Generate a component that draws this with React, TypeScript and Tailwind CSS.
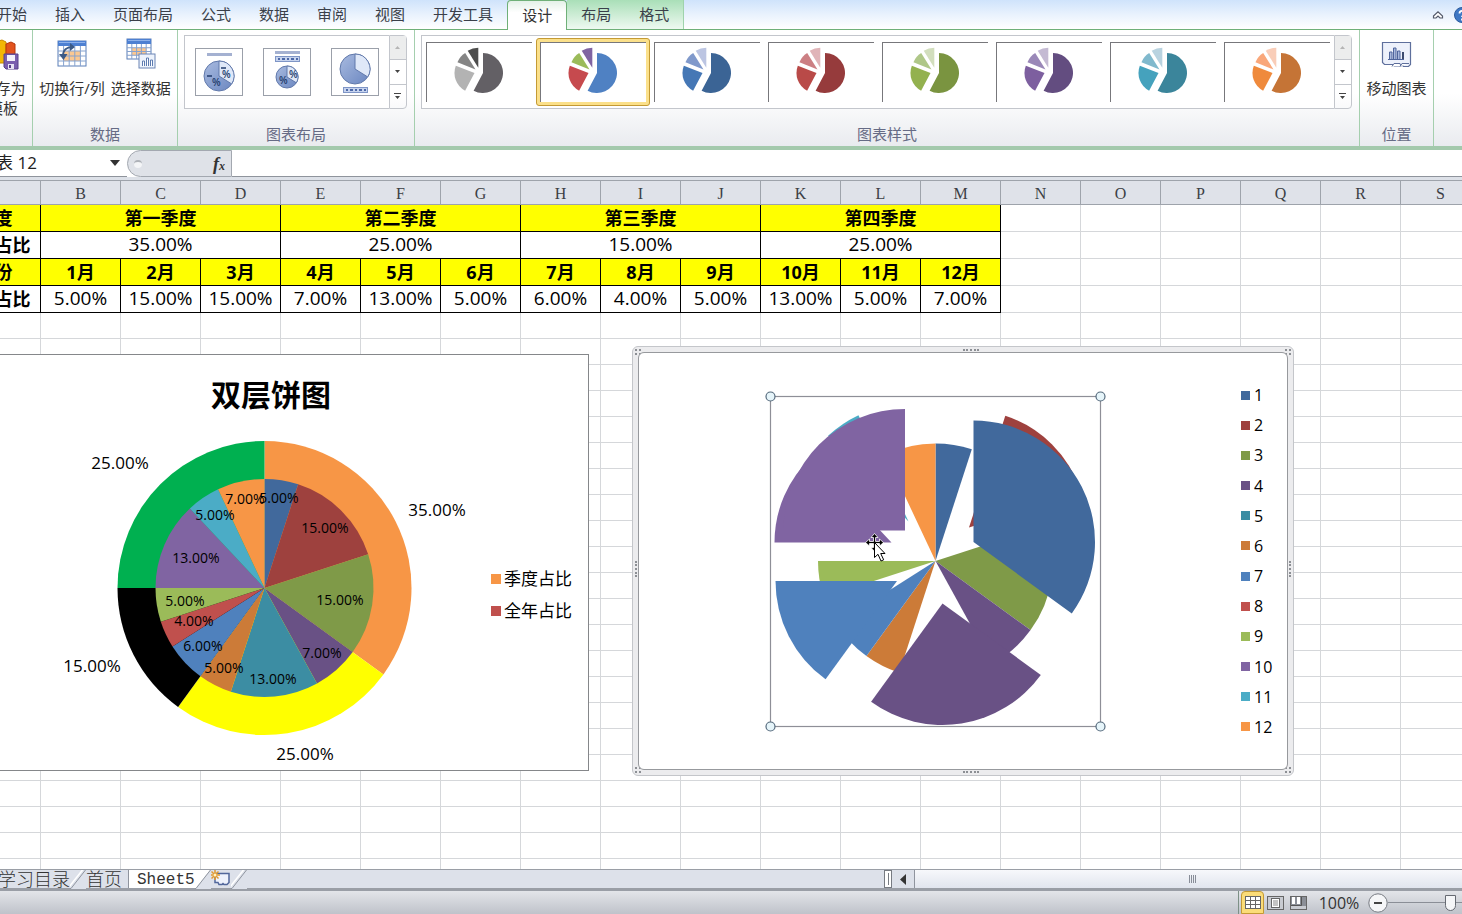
import type { ReactNode } from 'react'

const menuTabs = ['开始', '插入', '页面布局', '公式', '数据', '审阅', '视图', '开发工具']

const columns = 'BCDEFGHIJKLMNOPQRS'.split('')

const quarters = [
  { name: '第一季度', share: '35.00%' },
  { name: '第二季度', share: '25.00%' },
  { name: '第三季度', share: '15.00%' },
  { name: '第四季度', share: '25.00%' },
]

const months = ['5.00%', '15.00%', '15.00%', '7.00%', '13.00%', '5.00%', '6.00%', '4.00%', '5.00%', '13.00%', '5.00%', '7.00%']

const palette = [
  '#41699c', '#9e413e', '#7f9a48', '#695185', '#3c8da3', '#cc7b38',
  '#4f81bd', '#c0504d', '#9bbb59', '#8064a2', '#4bacc6', '#f79646',
]

const legendColors = [
  'bg-[#41699c]', 'bg-[#9e413e]', 'bg-[#7f9a48]', 'bg-[#695185]', 'bg-[#3c8da3]', 'bg-[#cc7b38]',
  'bg-[#4f81bd]', 'bg-[#c0504d]', 'bg-[#9bbb59]', 'bg-[#8064a2]', 'bg-[#4bacc6]', 'bg-[#f79646]',
]

// big slice, second, third, fourth
const chartStyles = [
  ['#636065', '#b3b3b3', '#858585', '#4d4d4d'],
  ['#4f81c3', '#c64a4e', '#9bbb59', '#8064a2'],
  ['#3b6495', '#4577b5', '#8099cb', '#bcc5e2'],
  ['#963b3c', '#b94a48', '#cc7f83', '#e0b4b8'],
  ['#7a9440', '#93b14f', '#afc788', '#d2debd'],
  ['#634d80', '#7d5f9f', '#9a88b8', '#c4bad3'],
  ['#3b859b', '#45a2bd', '#80b9cd', '#b9d3e0'],
  ['#c57436', '#ef8a3c', '#f9a77a', '#f9cdb8'],
]

// wedge with its tip at cx,cy; angles in degrees, clockwise from 12 o'clock
function wedge(cx: number, cy: number, r: number, from: number, to: number) {
  const point = (deg: number) => {
    const a = (deg * Math.PI) / 180
    return `${(cx + r * Math.sin(a)).toFixed(2)} ${(cy - r * Math.cos(a)).toFixed(2)}`
  }
  return `M${cx} ${cy}L${point(from)}A${r} ${r} 0 ${to - from > 180 ? 1 : 0} 1 ${point(to)}Z`
}

const monthAngles = [0, 18, 72, 126, 151.2, 198, 216, 237.6, 252, 270, 316.8, 334.8, 360]

function Group({ label, className, children }: { label?: string; className: string; children?: ReactNode }) {
  return (
    <section className={`flex shrink-0 flex-col border-r border-[#a5cfae] ${className}`}>
      <div className="flex flex-1 justify-center">{children}</div>
      <h2 className="h-[22px] text-center text-[15px] leading-5 whitespace-nowrap text-[#666b85]">{label}</h2>
    </section>
  )
}

function RibbonButton({ icon, children }: { icon: ReactNode; children: ReactNode }) {
  return (
    <button className="flex shrink-0 flex-col items-center gap-2 pt-2 text-[15px] leading-5 whitespace-nowrap text-[#333]">
      {icon}
      <span>{children}</span>
    </button>
  )
}

function GalleryScroll() {
  return (
    <div className="flex w-[18px] flex-col divide-y divide-[#c3c6cc] rounded-r-sm border border-[#c3c6cc]">
      <button aria-label="上一行" className="flex flex-1 items-center justify-center bg-[#eceded]">
        <svg width="5" height="3"><path d="M0 3h5L2.500 0z" fill="#b5b5b5" /></svg>
      </button>
      <button aria-label="下一行" className="flex flex-1 items-center justify-center">
        <svg width="5" height="3"><path d="M0 0h5L2.500 3z" fill="#444" /></svg>
      </button>
      <button aria-label="其他" className="flex flex-1 items-center justify-center">
        <svg width="7" height="6"><path d="M0 0h7v1H0zM1 3h5L3.500 6z" fill="#444" /></svg>
      </button>
    </div>
  )
}

function TableGrid({ width, height, x, y }: { width: number; height: number; x: number; y: number }) {
  const w = width / 5
  const h = (height - 5) / 4
  return (
    <g>
      <rect x={x} y={y} width={width} height={height} fill="#fff" stroke="#5b7fb8" />
      <rect x={x + w} y={y + 5 + h} width={w * 3} height={h * 2} fill="#fbc891" />
      <path
        d={[1, 2, 3, 4].map(i => `M${x + w * i} ${y + 5}v${height - 5}`).join('') + [1, 2, 3].map(i => `M${x} ${y + 5 + h * i}h${width}`).join('')}
        stroke="#86a3cf"
      />
      <rect x={x} y={y} width={width} height="5" fill="#4d80d2" />
      <path d={`M${x + 1} ${y + 1.500}h${width - 2}`} stroke="#8db1ea" />
    </g>
  )
}

function SaveTemplateIcon() {
  return (
    <svg width="32" height="32" viewBox="0 0 32 32">
      <path d="M8 4l7-2 4 2v21H8z" fill="#f2b705" stroke="#c68a00" />
      <path d="M19 6l5-2 4 2v17h-9z" fill="#e2531d" stroke="#b5360b" />
      <path d="M17 16h14v15H19l-2-2z" fill="#7a5fae" stroke="#57418a" />
      <rect x="20" y="17" width="8" height="6" fill="#f3f1fa" />
      <rect x="21" y="26" width="6" height="5" fill="#e7e3f3" />
      <rect x="22" y="27" width="2" height="3" fill="#57418a" />
    </svg>
  )
}

function SwitchIcon() {
  return (
    <svg width="32" height="32" viewBox="0 0 32 32">
      <TableGrid x={2} y={3} width={28} height={25} />
      <path d="M7 18c0-6 4-9 9-9" fill="none" stroke="#3c5a85" strokeWidth="2" />
      <path d="M14 5l5 4-5 4zM3 16l4.500 6 4-6z" fill="#3c5a85" />
    </svg>
  )
}

function SelectDataIcon() {
  return (
    <svg width="32" height="32" viewBox="0 0 32 32">
      <TableGrid x={2} y={1} width={24} height={20} />
      <rect x="14" y="16" width="16" height="14" fill="#edf3fc" stroke="#6c86b5" />
      <path d="M17.500 28v-5h2v5M21.500 28v-8h2v8M25.500 28v-6h2v6" fill="#fff" stroke="#5c7bb0" />
    </svg>
  )
}

function MoveChartIcon() {
  return (
    <svg width="32" height="32" viewBox="0 0 32 32">
      <path d="M2.500 4.500h28v22l-2 2h-5l-2-2-2 2h-5l-2-2H4.500l-2-2z" fill="#edf1fb" stroke="#5e6f9c" strokeWidth="1.200" />
      <path d="M12 28.500l2-3h6l1 3M20 28.500l2-3h7" fill="#fff" stroke="#5e6f9c" />
      <path d="M9.500 21v-7h2.500v7M13.500 21V10h2.500v11M17.500 21v-8h2.500v8" fill="#a9b9dd" stroke="#4f659c" />
      <path d="M22 14h2v7h-2z" fill="#3d4b6e" />
      <path d="M8 21.500h16" stroke="#4f659c" />
    </svg>
  )
}

function LayoutIcon({ kind }: { kind: number }) {
  const cy = [27, 28, 20][kind]
  const r = kind === 1 ? 11 : 15
  return (
    <svg width="46" height="46" viewBox="0 0 46 46">
      <defs>
        <linearGradient id="layoutPie" x1="0" y1="0" x2="1" y2="1">
          <stop offset="0" stopColor="#a9bbe0" />
          <stop offset="1" stopColor="#6a86c0" />
        </linearGradient>
      </defs>
      {kind < 2 && <rect x="11" y={kind ? 2 : 4} width="25" height="3" fill="#a4b1d1" />}
      {kind > 0 && (
        <g>
          <rect x="11.500" y={kind === 1 ? 7.500 : 38.500} width="24" height="5" fill="#c6d3ee" stroke="#7e95c6" />
          <path d={kind === 1 ? 'M14 10h20' : 'M14 41h20'} stroke="#4d69a8" strokeWidth="2" strokeDasharray="2 2 3 2" />
        </g>
      )}
      <circle cx="23" cy={cy} r={r} fill="url(#layoutPie)" stroke="#6179ab" />
      <path d={wedge(23, cy, r, 0, 122)} fill="#dfe8f8" stroke="#6179ab" />
      {kind === 0 && (
        <g fontFamily="Open Sans, sans-serif" fontSize="10" fontWeight="600" fill="#223c6d">
          <text x="26" y="29">%</text>
          <text x="16" y="37">%</text>
          <path d="M25 19h5M11 27h5" stroke="#223c6d" strokeWidth="1.500" />
        </g>
      )}
      {kind === 1 && (
        <g fontFamily="Open Sans, sans-serif" fontSize="10" fontWeight="600" fill="#223c6d">
          <text x="25" y="29">%</text>
          <text x="15" y="35">%</text>
        </g>
      )}
    </svg>
  )
}

function StyleIcon({ colors }: { colors: string[] }) {
  return (
    <svg width="56" height="52" viewBox="0 0 56 52">
      <path d={wedge(33, 28, 20, 0, 208)} fill={colors[0]} />
      <path d={wedge(24.5, 28, 20, 208, 291)} fill={colors[1]} />
      <path d={wedge(25.5, 24.5, 19.5, 292, 328)} fill={colors[2]} />
      <path d={wedge(28.3, 22.7, 20, 328, 360)} fill={colors[3]} />
    </svg>
  )
}

function MenuBar() {
  return (
    <nav className="flex h-[30px] shrink-0 items-stretch border-b border-[#6fb078] bg-linear-to-b from-[#cfe3fb] via-[#e9f2fd] to-white text-[15px] text-[#3a3f4a]">
      <div className="-ml-[17px] flex min-w-0 flex-1 pr-4">
        {menuTabs.map(tab => (
          <button key={tab} className="shrink-0 px-3.5 whitespace-nowrap">{tab}</button>
        ))}
        <button className="-mb-px shrink-0 rounded-t-sm border-x border-t border-[#6fb078] bg-linear-to-b from-[#e4f1e8] to-white to-40% px-3.5 text-[#333]">
          设计
        </button>
        <div className="flex shrink-0 border-r border-[#9fd3ac] bg-linear-to-b from-[#a9dfb8] to-[#eef9f1]">
          <button className="px-3.5">布局</button>
          <button className="px-3.5">格式</button>
        </div>
      </div>
      <div className="flex shrink-0 items-center gap-2 overflow-hidden">
        <button aria-label="功能区最小化">
          <svg width="16" height="10" viewBox="0 0 16 10">
            <path d="M3.500 6L8 1.800 12.500 6v2H10L8 6 6 8H3.500z" fill="#fff" stroke="#555b6b" strokeWidth="1.200" />
          </svg>
        </button>
        <button aria-label="帮助" className="-mr-2">
          <svg width="16" height="16" viewBox="0 0 16 16">
            <circle cx="8" cy="8" r="7.500" fill="#3f78c4" stroke="#2c5b9e" />
            <path d="M5.500 6.500c0-3.500 5-3.500 5 0 0 2-2.500 1.800-2.500 3.500M8 11.500v2" fill="none" stroke="#fff" strokeWidth="1.800" />
          </svg>
        </button>
      </div>
    </nav>
  )
}

function Ribbon() {
  return (
    <div className="flex h-[120px] shrink-0 overflow-hidden border-b-4 border-[#a3c9ac] bg-linear-to-b from-white from-55% to-[#e9ebef]">
      <Group className="w-[33px]">
        <div className="-ml-[26px]">
          <RibbonButton icon={<SaveTemplateIcon />}>
            另存为<br />模板
          </RibbonButton>
        </div>
      </Group>
      <Group label="数据" className="w-[145px]">
        <div className="flex gap-1.5">
          <RibbonButton icon={<SwitchIcon />}>切换行/列</RibbonButton>
          <RibbonButton icon={<SelectDataIcon />}>选择数据</RibbonButton>
        </div>
      </Group>
      <Group label="图表布局" className="w-[237px]">
        <div className="mt-[5px] mr-0.5 flex h-[74px]">
          <div className="flex items-center gap-5 border border-r-0 border-[#c3c6cc] bg-white px-2.5">
            {[0, 1, 2].map(kind => (
              <button key={kind} aria-label={`布局 ${kind + 1}`} className="border border-[#9ba0aa] bg-white">
                <LayoutIcon kind={kind} />
              </button>
            ))}
          </div>
          <GalleryScroll />
        </div>
      </Group>
      <Group label="图表样式" className="w-[945px]">
        <div className="mt-[5px] mr-0.5 flex h-[74px]">
          <div className="flex items-center border border-r-0 border-[#c3c6cc] bg-white">
            {chartStyles.map((colors, i) => (
              <button
                key={i}
                aria-label={`样式 ${i + 1}`}
                className={
                  i === 1
                    ? 'h-[68px] w-[114px] rounded-[3px] border border-[#c49a34] bg-[#fbe08a] p-[3px]'
                    : 'h-[68px] w-[114px] p-1'
                }
              >
                <span className="flex h-full w-full items-start justify-center border-t border-l border-[#77777b] bg-white pt-0.5 pr-0.5">
                  <StyleIcon colors={colors} />
                </span>
              </button>
            ))}
          </div>
          <GalleryScroll />
        </div>
      </Group>
      <Group label="位置" className="w-[74px]">
        <RibbonButton icon={<MoveChartIcon />}>移动图表</RibbonButton>
      </Group>
    </div>
  )
}

function FormulaBar() {
  return (
    <div className="flex h-[30px] shrink-0 border-b-3 border-[#dde1e8] bg-white">
      <div className="flex w-[127px] shrink-0 items-center border-b border-[#8f949c]">
        <input aria-label="名称框" defaultValue="表 12" className="-ml-1 w-[114px] text-[17px] text-[#222] outline-none" />
        <button aria-label="名称列表">
          <svg width="10" height="6"><path d="M0 0h10L5 6z" fill="#333" /></svg>
        </button>
      </div>
      <div className="flex w-[105px] shrink-0 items-center justify-between rounded-l-full border border-[#a3a8b0] bg-[#dfe2e8] pr-1.5 pl-1.5">
        <span className="h-2 w-2 rounded-full border-t-2 border-[#aeb2b8] bg-[#f4f5f7]" />
        <button className="flex items-center font-['Liberation_Serif',serif] text-lg leading-none font-bold text-[#333] italic">
          f<span className="pt-1 text-xs">x</span>
        </button>
      </div>
      <input aria-label="编辑栏" className="min-w-0 flex-1 border-b border-[#8f949c] text-base outline-none" />
    </div>
  )
}

function Cells() {
  return (
    <table className="-ml-[51px] w-[1532px] table-fixed border-separate border-spacing-0 text-center text-black">
      <colgroup>
        <col className="w-[92px]" />
        {columns.map(c => <col key={c} className="w-20" />)}
      </colgroup>
      <thead>
        <tr className="h-[25px] bg-[#dfe2e9] font-['Liberation_Serif',serif] text-base leading-5 text-[#3c3f45]">
          <th className="border-t border-r border-b border-[#9ea3ab] p-0" />
          {columns.map(c => (
            <th key={c} className="border-t border-r border-b border-[#9ea3ab] p-0 pt-0.5 font-normal">{c}</th>
          ))}
        </tr>
      </thead>
      <tbody>
        <tr className="h-[27px] text-lg leading-6">
          <th className="border-r border-b border-black bg-[#ffff00] p-0">季度</th>
          {quarters.map(q => (
            <th key={q.name} colSpan={3} className="border-r border-b border-black bg-[#ffff00] p-0">{q.name}</th>
          ))}
          <Blank count={6} />
        </tr>
        <tr className="h-[27px] text-[19px] leading-6">
          <th className="border-r border-b border-black p-0 text-lg leading-6">季度占比</th>
          {quarters.map(q => (
            <td key={q.name} colSpan={3} className="border-r border-b border-black p-0 pb-0.5">{q.share}</td>
          ))}
          <Blank count={6} />
        </tr>
        <tr className="h-[27px] text-lg leading-6">
          <th className="border-r border-b border-black bg-[#ffff00] p-0">月份</th>
          {months.map((_, i) => (
            <th key={i} className="border-r border-b border-black bg-[#ffff00] p-0">{i + 1}月</th>
          ))}
          <Blank count={6} />
        </tr>
        <tr className="h-[27px] text-[19px] leading-6">
          <th className="border-r border-b border-black p-0 text-lg leading-6">全年占比</th>
          {months.map((share, i) => (
            <td key={i} className="border-r border-b border-black p-0 pb-0.5">{share}</td>
          ))}
          <Blank count={6} />
        </tr>
        {Array.from({ length: 30 }, (_, i) => (
          <tr key={i} className="h-[26px]">
            <Blank count={19} />
          </tr>
        ))}
      </tbody>
    </table>
  )
}

function Blank({ count }: { count: number }) {
  return Array.from({ length: count }, (_, i) => <td key={i} className="border-r border-b border-[#d5d7da] p-0" />)
}

const innerLabels = [
  [279, 148], [325, 178], [340, 250], [322, 303], [273, 329], [224, 318],
  [203, 296], [194, 271], [185, 251], [196, 208], [215, 165], [245, 149],
]

function DoublePie() {
  return (
    <figure className="absolute top-[174px] left-0 flex h-[417px] w-[589px] items-center justify-between border border-l-0 border-[#85878a] bg-white">
      <svg width="480" height="415" viewBox="0 0 480 415" className="shrink-0" fontFamily="'Open Sans', 'Noto Sans CJK SC', sans-serif">
        <text x="271" y="51" textAnchor="middle" fontSize="30" fontWeight="700">双层饼图</text>
        <path d={wedge(264.5, 233, 147, 0, 126)} fill="#f79646" />
        <path d={wedge(264.5, 233, 147, 126, 216)} fill="#ffff00" />
        <path d={wedge(264.5, 233, 147, 216, 270)} fill="#000" />
        <path d={wedge(264.5, 233, 147, 270, 360)} fill="#00b050" />
        {palette.map((color, i) => (
          <path key={color} d={wedge(264.5, 233, 109, monthAngles[i], monthAngles[i + 1])} fill={color} />
        ))}
        <g textAnchor="middle" fontSize="14">
          {innerLabels.map(([x, y], i) => <text key={i} x={x} y={y}>{months[i]}</text>)}
        </g>
        <g textAnchor="middle" fontSize="17">
          <text x="437" y="161">35.00%</text>
          <text x="305" y="405">25.00%</text>
          <text x="92" y="317">15.00%</text>
          <text x="120" y="114">25.00%</text>
        </g>
      </svg>
      <ul className="mt-16 flex flex-col gap-2 pr-4 text-[17px] leading-6 whitespace-nowrap">
        <li className="flex items-center gap-[3px]"><i className="size-2.5 bg-[#f79646]" />季度占比</li>
        <li className="flex items-center gap-[3px]"><i className="size-2.5 bg-[#c0504d]" />全年占比</li>
      </ul>
    </figure>
  )
}

// month slices that sit on the shared centre; the rest have been pulled out
const base = [0, 2, 3, 5, 6, 8, 11]

function Grip({ className }: { className: string }) {
  return <span className={`absolute border-dotted border-[#8c8f94] ${className}`} />
}

function ExplodedPie() {
  return (
    <figure className="absolute top-[166px] left-[632px] h-[430px] w-[662px] rounded-md border border-[#c4c6ca] bg-[#ececee] p-[5px]">
      <Grip className="top-0.5 left-1/2 w-4 border-t-2" />
      <Grip className="bottom-0.5 left-1/2 w-4 border-b-2" />
      <Grip className="top-1/2 left-0.5 h-4 border-l-2" />
      <Grip className="top-1/2 right-0.5 h-4 border-r-2" />
      <Grip className="top-0.5 left-0.5 size-1.5 border-2" />
      <Grip className="top-0.5 right-0.5 size-1.5 border-2" />
      <Grip className="bottom-0.5 left-0.5 size-1.5 border-2" />
      <Grip className="right-0.5 bottom-0.5 size-1.5 border-2" />
      <div className="relative flex h-full justify-between rounded-md border border-[#97999d] bg-white pr-[15px]">
        <svg width="480" height="416" viewBox="0 0 480 416" className="shrink-0">
          {base.map(i => (
            <path key={i} d={wedge(296.5, 208, 117.5, monthAngles[i], monthAngles[i + 1])} fill={palette[i]} />
          ))}
          <path d={wedge(330, 174.5, 117.5, 18, 72)} fill={palette[1]} />
          <path d={wedge(269.5, 168.5, 117.5, 316.8, 334.8)} fill={palette[10]} />
          <path d={wedge(252.5, 189.5, 117, 270, 316.8)} fill={palette[9]} />
          <path d={wedge(334.5, 189, 121.5, 0, 126)} fill={palette[0]} />
          <path d={wedge(303.5, 250.5, 121.5, 126, 216)} fill={palette[3]} />
          <path d={wedge(258, 228, 121.5, 216, 270)} fill={palette[6]} />
          <path d={wedge(266, 177.5, 121.5, 270, 360)} fill={palette[9]} />
          <rect x="131.500" y="43.500" width="330" height="330" fill="none" stroke="#8e8f97" strokeWidth="1.200" />
          {[131.5, 461.5].map(x => [43.5, 373.5].map(y => (
            <circle key={`${x}-${y}`} cx={x} cy={y} r="4.500" fill="#e6f5fa" stroke="#54697c" strokeWidth="1.200" />
          )))}
          {/* move pointer */}
          <g transform="translate(235.500 189.500)">
            <path d="M0-9l3.500 4H1v4h4v-2.500L9 0 5 3.500V1H1v4h2.500L0 9l-3.500-4H-1V1h-4v2.500L-9 0l4-3.500V-1h4v-4h-2.500z" fill="#000" stroke="#fff" strokeWidth=".8" />
            <path d="M0 0v15l3.500-3.200L6.500 18.500l2.700-1.200-3-6.300H10.500z" fill="#fff" stroke="#000" />
          </g>
        </svg>
        <ul className="mt-8 flex h-[352px] w-[31px] flex-col justify-between text-base leading-5">
          {legendColors.map((color, i) => (
            <li key={color} className="flex items-center gap-1"><i className={`size-[9px] shrink-0 ${color}`} />{i + 1}</li>
          ))}
        </ul>
      </div>
    </figure>
  )
}

function Slant() {
  return (
    <svg width="16" height="19" viewBox="0 0 16 19" className="shrink-0">
      <path d="M0 19L15 0h1v19z" fill="#dde1ea" />
      <path d="M0 18.500h1L15.500 0" fill="none" stroke="#8f949e" />
      <path d="M-1 17L12.500 0" stroke="#fff" strokeWidth="1.500" />
    </svg>
  )
}

function SheetTabs() {
  return (
    <div className="flex h-[22px] shrink-0 border-t border-b-3 border-[#9a9ea6] bg-[#dde1ea] text-lg leading-[18px] font-light whitespace-nowrap text-[#333]">
      <div className="flex min-w-0 flex-1">
        <button className="-ml-0.5">学习目录</button>
        <Slant />
        <button className="border-r border-[#8f949e] pr-1.5">首页</button>
        <button className="bg-white pl-2 font-['Liberation_Mono',monospace] text-base leading-5">Sheet5</button>
        <span className="bg-white"><Slant /></span>
        <button aria-label="插入工作表">
          <svg width="20" height="18" viewBox="0 0 20 18">
            <path d="M4 3.500h14v9l-2 2h-3l-1-1-1 1H8l-1-2H4z" fill="#eef2fc" stroke="#52679b" strokeWidth="1.500" />
            <path d="M4 0v10M-1 5H9M.5 1.500l7 7M7.500 1.500l-7 7" stroke="#e39a2e" strokeWidth="1.500" />
            <circle cx="4" cy="5" r="1.500" fill="#fff3c4" />
          </svg>
        </button>
        <Slant />
      </div>
      <div className="flex w-[578px] shrink-0 items-stretch">
        <span className="flex w-2 justify-center border border-[#777b82] bg-white py-0.5"><i className="w-px bg-[#777b82]" /></span>
        <button aria-label="向左滚动" className="flex w-[22px] items-center justify-center">
          <svg width="6" height="11"><path d="M6 0v11L0 5.500z" fill="#333" /></svg>
        </button>
        <div className="flex flex-1 items-center justify-center border-l border-[#8f949e] bg-linear-to-b from-[#f7f8fb] to-[#e1e5ee] pl-2">
          <svg width="8" height="8"><path d="M.5 0v8M2.500 0v8M4.500 0v8M6.500 0v8" stroke="#888d98" /></svg>
        </div>
      </div>
    </div>
  )
}

function StatusBar() {
  return (
    <footer className="flex h-[23px] shrink-0 items-center justify-end overflow-hidden bg-linear-to-b from-[#e3e5e9] to-[#bfc2ca] text-[#333]">
      <div className="flex h-full items-center border-l border-[#7d9086] pl-0.5">
        <button aria-label="普通" className="flex h-full w-[23px] items-center justify-center rounded-t-sm border border-[#c49a34] bg-[#fbdc78]">
          <svg width="16" height="13" viewBox="0 0 16 13">
            <rect width="16" height="13" fill="#666" />
            <path d="M1 1h4v3H1zM6 1h4v3H6zM11 1h4v3h-4zM1 5h4v3H1zM6 5h4v3H6zM11 5h4v3h-4zM1 9h4v3H1zM6 9h4v3H6zM11 9h4v3h-4z" fill="#fff" />
          </svg>
        </button>
        <button aria-label="页面布局" className="flex w-[23px] justify-center">
          <svg width="17" height="14" viewBox="0 0 17 14">
            <rect x=".5" y=".5" width="16" height="13" fill="#c8cbd1" stroke="#666" />
            <rect x="4.500" y="2.500" width="8" height="9" fill="#fff" stroke="#666" />
            <path d="M6 5h5M6 7h5M6 9h5" stroke="#888" />
          </svg>
        </button>
        <button aria-label="分页预览" className="flex w-[23px] justify-center">
          <svg width="17" height="14" viewBox="0 0 17 14">
            <rect x=".5" y=".5" width="16" height="13" fill="#8b8f97" stroke="#666" />
            <path d="M2 1h3v7H2zM7 1h3v7H7z" fill="#fff" />
            <path d="M1 9.500h10.500V1" fill="none" stroke="#555" />
            <path d="M1 10h15v3H1z" fill="#c8cbd1" />
          </svg>
        </button>
        <span className="w-[58px] text-center text-base">100%</span>
        <button aria-label="缩小">
          <svg width="20" height="20" viewBox="0 0 20 20">
            <circle cx="10" cy="10" r="9.200" fill="#f5f6f8" stroke="#777b82" />
            <path d="M6 10h8" stroke="#444" strokeWidth="2" />
          </svg>
        </button>
        <input
          type="range"
          aria-label="显示比例"
          defaultValue={50}
          className="-mr-[50px] h-5 w-[124px] appearance-none bg-transparent bg-[linear-gradient(#8a8e96,#8a8e96)] bg-[length:100%_1px] bg-center bg-no-repeat [&::-webkit-slider-thumb]:h-4 [&::-webkit-slider-thumb]:w-[11px] [&::-webkit-slider-thumb]:appearance-none [&::-webkit-slider-thumb]:rounded-b-md [&::-webkit-slider-thumb]:border [&::-webkit-slider-thumb]:border-[#666a72] [&::-webkit-slider-thumb]:bg-[#f5f6f8]"
        />
      </div>
    </footer>
  )
}

export default function App() {
  return (
    <div className="flex h-screen flex-col overflow-hidden bg-white font-['Open_Sans','Noto_Sans_CJK_SC',sans-serif]">
      <MenuBar />
      <Ribbon />
      <FormulaBar />
      <main className="relative min-h-0 flex-1 overflow-hidden">
        <Cells />
        <DoublePie />
        <ExplodedPie />
      </main>
      <SheetTabs />
      <StatusBar />
    </div>
  )
}
